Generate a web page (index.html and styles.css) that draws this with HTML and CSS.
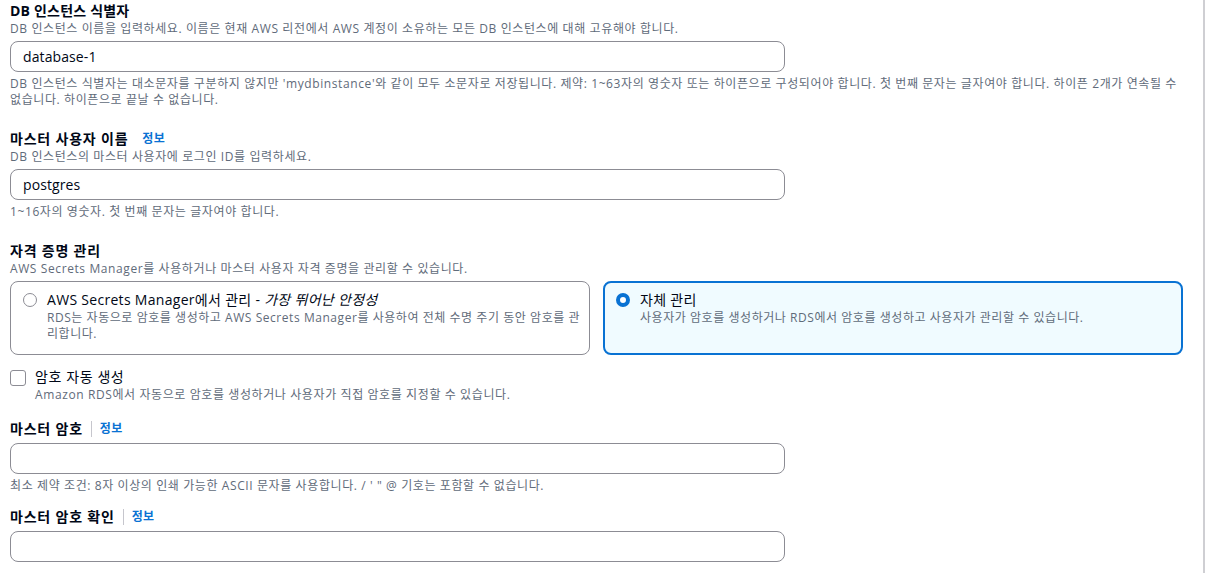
FILE: index.html
```html
<!DOCTYPE html>
<html lang="ko">
<head>
<meta charset="utf-8">
<link rel="stylesheet" href="styles.css">
</head>
<body>
<div class="page">
  <div class="field f1">
    <div class="label label-narrow"><span class="label-text">DB 인스턴스 식별자</span></div>
    <div class="desc">DB 인스턴스 이름을 입력하세요. 이름은 현재 AWS 리전에서 AWS 계정이 소유하는 모든 DB 인스턴스에 대해 고유해야 합니다.</div>
    <div class="input"><span class="value">database-1</span></div>
    <div class="hint">DB 인스턴스 식별자는 대소문자를 구분하지 않지만 'mydbinstance'와 같이 모두 소문자로 저장됩니다. 제약: 1~63자의 영숫자 또는 하이픈으로 구성되어야 합니다. 첫 번째 문자는 글자여야 합니다. 하이픈 2개가 연속될 수 없습니다. 하이픈으로 끝날 수 없습니다.</div>
  </div>

  <div class="field f2">
    <div class="label"><span class="label-text">마스터 사용자 이름</span><a class="info info-plain">정보</a></div>
    <div class="desc">DB 인스턴스의 마스터 사용자에 로그인 ID를 입력하세요.</div>
    <div class="input"><span class="value">postgres</span></div>
    <div class="hint">1~16자의 영숫자. 첫 번째 문자는 글자여야 합니다.</div>
  </div>

  <div class="field f3">
    <div class="label"><span class="label-text">자격 증명 관리</span></div>
    <div class="desc">AWS Secrets Manager를 사용하거나 마스터 사용자 자격 증명을 관리할 수 있습니다.</div>
    <div class="tiles">
      <div class="tile">
        <span class="radio"></span>
        <div class="tile-body">
          <div class="tile-title">AWS Secrets Manager에서 관리 - <em>가장 뛰어난 안정성</em></div>
          <div class="tile-desc">RDS는 자동으로 암호를 생성하고 AWS Secrets Manager를 사용하여 전체 수명 주기 동안 암호를 관리합니다.</div>
        </div>
      </div>
      <div class="tile tile-selected">
        <span class="radio radio-checked"></span>
        <div class="tile-body">
          <div class="tile-title">자체 관리</div>
          <div class="tile-desc">사용자가 암호를 생성하거나 RDS에서 암호를 생성하고 사용자가 관리할 수 있습니다.</div>
        </div>
      </div>
    </div>
  </div>

  <div class="check-row">
    <span class="checkbox"></span>
    <div class="check-body">
      <div class="check-title">암호 자동 생성</div>
      <div class="desc">Amazon RDS에서 자동으로 암호를 생성하거나 사용자가 직접 암호를 지정할 수 있습니다.</div>
    </div>
  </div>

  <div class="field f4">
    <div class="label"><span class="label-text">마스터 암호</span><span class="divider"></span><a class="info">정보</a></div>
    <div class="input"></div>
    <div class="hint">최소 제약 조건: 8자 이상의 인쇄 가능한 ASCII 문자를 사용합니다. / ' " @ 기호는 포함할 수 없습니다.</div>
  </div>

  <div class="field f5">
    <div class="label"><span class="label-text">마스터 암호 확인</span><span class="divider"></span><a class="info">정보</a></div>
    <div class="input"></div>
  </div>
</div>
</body>
</html>
```

FILE: styles.css
```css
* { box-sizing: border-box; }
html, body { margin: 0; padding: 0; background: #ffffff; }
body {
  font-family: "Open Sans", "Noto Sans CJK KR", sans-serif;
  color: #000716;
}
.page {
  width: 1205px;
  height: 573px;
  border-right: 2px solid #cfcfd3;
  padding: 0 16px 0 10px;
  overflow: hidden;
}
.field { display: flex; flex-direction: column; }
.label {
  display: flex;
  align-items: center;
  height: 21px;
  font-size: 14px;
  font-weight: 700;
  line-height: 21px;
  letter-spacing: 0.8px;
}
.label-narrow { letter-spacing: 0.2px; }
.info {
  color: #0972d3;
  font-size: 12px;
  font-weight: 700;
  letter-spacing: 0.3px;
  text-decoration: none;
}
.info-plain { margin-left: 14px; }
.divider {
  width: 1px;
  height: 16px;
  background: #c6c6cd;
  margin: 0 8px 0 8px;
}
.desc {
  font-size: 12px;
  line-height: 16px;
  color: #5f6b7a;
  letter-spacing: 0.6px;
}
.input {
  width: 775px;
  height: 31px;
  margin-top: 4px;
  border: 1px solid #8c8c94;
  border-radius: 8px;
  display: flex;
  align-items: center;
  padding-left: 12px;
  font-size: 14px;
  letter-spacing: 0.1px;
}
.hint {
  margin-top: 4px;
  font-size: 12px;
  line-height: 16px;
  color: #5f6b7a;
  letter-spacing: 0.6px;
}
.f2 { margin-top: 20px; }
.f3 { margin-top: 20px; }
.tiles {
  margin-top: 4px;
  display: grid;
  grid-template-columns: 1fr 1fr;
  column-gap: 13px;
  width: 1173px;
}
.tile {
  display: flex;
  align-items: flex-start;
  border: 1px solid #8c8c94;
  border-radius: 8px;
  padding: 8px 8px 12px 12px;
  gap: 10px;
}
.tile-selected {
  border: 2px solid #0972d3;
  background: #f0fbff;
  padding: 7px 7px 11px 11px;
}
.radio {
  flex: none;
  width: 14px;
  height: 14px;
  margin-top: 3px;
  border-radius: 50%;
  border: 1.5px solid #8c8c94;
  background: #fff;
}
.radio-checked { border: 4px solid #0972d3; }
.tile-title { font-size: 14px; line-height: 20px; letter-spacing: 0.3px; }
.tile-title em { font-style: italic; }
.tile-desc {
  font-size: 12px;
  line-height: 16px;
  color: #5f6b7a;
  letter-spacing: 0.55px;
  word-break: break-all;
}
.check-row {
  display: flex;
  align-items: flex-start;
  margin-top: 12px;
  gap: 9px;
}
.checkbox {
  flex: none;
  width: 16px;
  height: 16px;
  margin-top: 3px;
  border: 1.5px solid #8c8c94;
  border-radius: 3px;
  background: #fff;
}
.check-title { font-size: 14px; line-height: 20px; letter-spacing: 0.6px; }
.f4 { margin-top: 15px; }
.f5 { margin-top: 12px; }
```
